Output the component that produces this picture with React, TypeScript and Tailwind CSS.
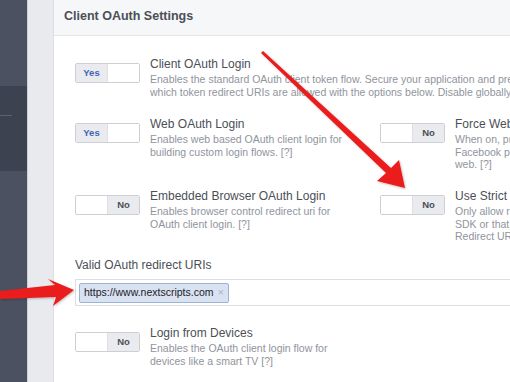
import React from 'react'

type Setting = {
  title: string
  lines: string[]
  on: boolean
}

const font = { fontFamily: '"Liberation Sans", Arial, sans-serif' }

function Toggle({ on }: { on: boolean }) {
  return (
    <div className="flex w-[65px] h-[20px] shrink-0 rounded-[2px] border border-[#ccd0d5] overflow-hidden bg-white">
      {on ? (
        <>
          <div className="w-[32px] flex items-center justify-center bg-[#e9ebee] border-r border-[#dddfe2] text-[9.5px] font-bold text-[#4267b2]">
            Yes
          </div>
          <div className="flex-1 bg-white" />
        </>
      ) : (
        <>
          <div className="flex-1 bg-white" />
          <div className="w-[32px] flex items-center justify-center bg-[#e9ebee] border-l border-[#dddfe2] text-[9.5px] font-bold text-[#4b4f56]">
            No
          </div>
        </>
      )}
    </div>
  )
}

function SettingItem({ s }: { s: Setting }) {
  return (
    <div className="flex items-start gap-[10px]">
      <div className="mt-[7px]">
        <Toggle on={s.on} />
      </div>
      <div className="min-w-0">
        <div className="text-[12px] leading-[17px] text-[#4b4f56] whitespace-nowrap">{s.title}</div>
        {s.lines.map((l, i) => (
          <div key={i} className="text-[10.5px] leading-[12.5px] text-[#90949c] whitespace-nowrap">
            {l}
          </div>
        ))}
      </div>
    </div>
  )
}

const clientLogin: Setting = {
  title: 'Client OAuth Login',
  on: true,
  lines: [
    'Enables the standard OAuth client token flow. Secure your application and prevent abuse by locking down',
    'which token redirect URIs are allowed with the options below. Disable globally if not used.  [?]',
  ],
}

const rows: Setting[][] = [
  [
    {
      title: 'Web OAuth Login',
      on: true,
      lines: ['Enables web based OAuth client login for', 'building custom login flows.  [?]'],
    },
    {
      title: 'Force Web OAuth Reauthentication',
      on: false,
      lines: ['When on, prompts people to enter their', 'Facebook password in order to log in on the', 'web.  [?]'],
    },
  ],
  [
    {
      title: 'Embedded Browser OAuth Login',
      on: false,
      lines: ['Enables browser control redirect uri for', 'OAuth client login.  [?]'],
    },
    {
      title: 'Use Strict Mode for Redirect URIs',
      on: false,
      lines: ['Only allow redirects that use the Facebook', 'SDK or that exactly match the Valid OAuth', 'Redirect URIs. Strongly recommended.  [?]'],
    },
  ],
]

const devices: Setting = {
  title: 'Login from Devices',
  on: false,
  lines: ['Enables the OAuth client login flow for', 'devices like a smart TV [?]'],
}

export default function App() {
  return (
    <div className="relative w-[510px] h-[382px] overflow-hidden flex bg-[#e9eaed]" style={font}>
      {/* sidebar */}
      <div className="w-[28px] shrink-0 flex flex-col bg-[#4b5160] border-r border-[#c9d0dc]">
        <div className="h-[86px]" />
        <div className="h-[85px] bg-[#3c424f] pt-[29px]">
          <div className="w-[12px] h-px bg-[#5b616d]" />
        </div>
      </div>

      {/* gutter */}
      <div className="w-[25px] shrink-0" />

      {/* panel */}
      <div className="flex-1 min-w-0 bg-white border-l border-[#dddfe2] overflow-hidden">
        <div className="h-[36px] bg-[#f6f7f9] border-b border-[#e5e6e9] pl-[10px] pt-[8px]">
          <div className="text-[12.5px] leading-[16px] font-bold text-[#4b4f56] whitespace-nowrap">Client OAuth Settings</div>
        </div>

        <div className="pl-[21px] pt-[20px] flex flex-col">
          <SettingItem s={clientLogin} />

          <div className="grid grid-cols-[305px_1fr] mt-[18px]">
            <SettingItem s={rows[0][0]} />
            <SettingItem s={rows[0][1]} />
          </div>
          <div className="grid grid-cols-[305px_1fr] mt-[17.5px]">
            <SettingItem s={rows[1][0]} />
            <SettingItem s={rows[1][1]} />
          </div>

          <div className="mt-[14.5px] text-[12px] leading-[16px] text-[#4b4f56] whitespace-nowrap">Valid OAuth redirect URIs</div>
          <div className="mt-[6px] h-[27px] w-[500px] border border-[#dddfe2] bg-white flex items-center pl-[3px]">
            <div className="h-[20px] flex items-center gap-[4px] px-[4px] rounded-[2px] border border-[#9cb4d8] bg-[#d9e2f1] text-[10.5px] text-[#1d2129] whitespace-nowrap">
              https://www.nextscripts.com
              <span className="text-[11px] text-[#a8b4c8]">×</span>
            </div>
          </div>

          <div className="mt-[19px]">
            <SettingItem s={devices} />
          </div>
        </div>
      </div>

      {/* annotation arrows */}
      <svg className="absolute inset-0 pointer-events-none" width="510" height="382" viewBox="0 0 510 382">
        <defs>
          <filter id="sh" x="-10%" y="-10%" width="120%" height="120%">
            <feDropShadow dx="1" dy="1" stdDeviation="1" floodColor="#000" floodOpacity="0.25" />
          </filter>
        </defs>
        <g fill="#ea1b1f" filter="url(#sh)">
          <polygon points="261,53 263,51 391,168 399,160 405,188 377,181 386,173" />
          <polygon points="0,291 55,285 48,279 74,290 53,306 56,297 0,299" />
        </g>
      </svg>
    </div>
  )
}
